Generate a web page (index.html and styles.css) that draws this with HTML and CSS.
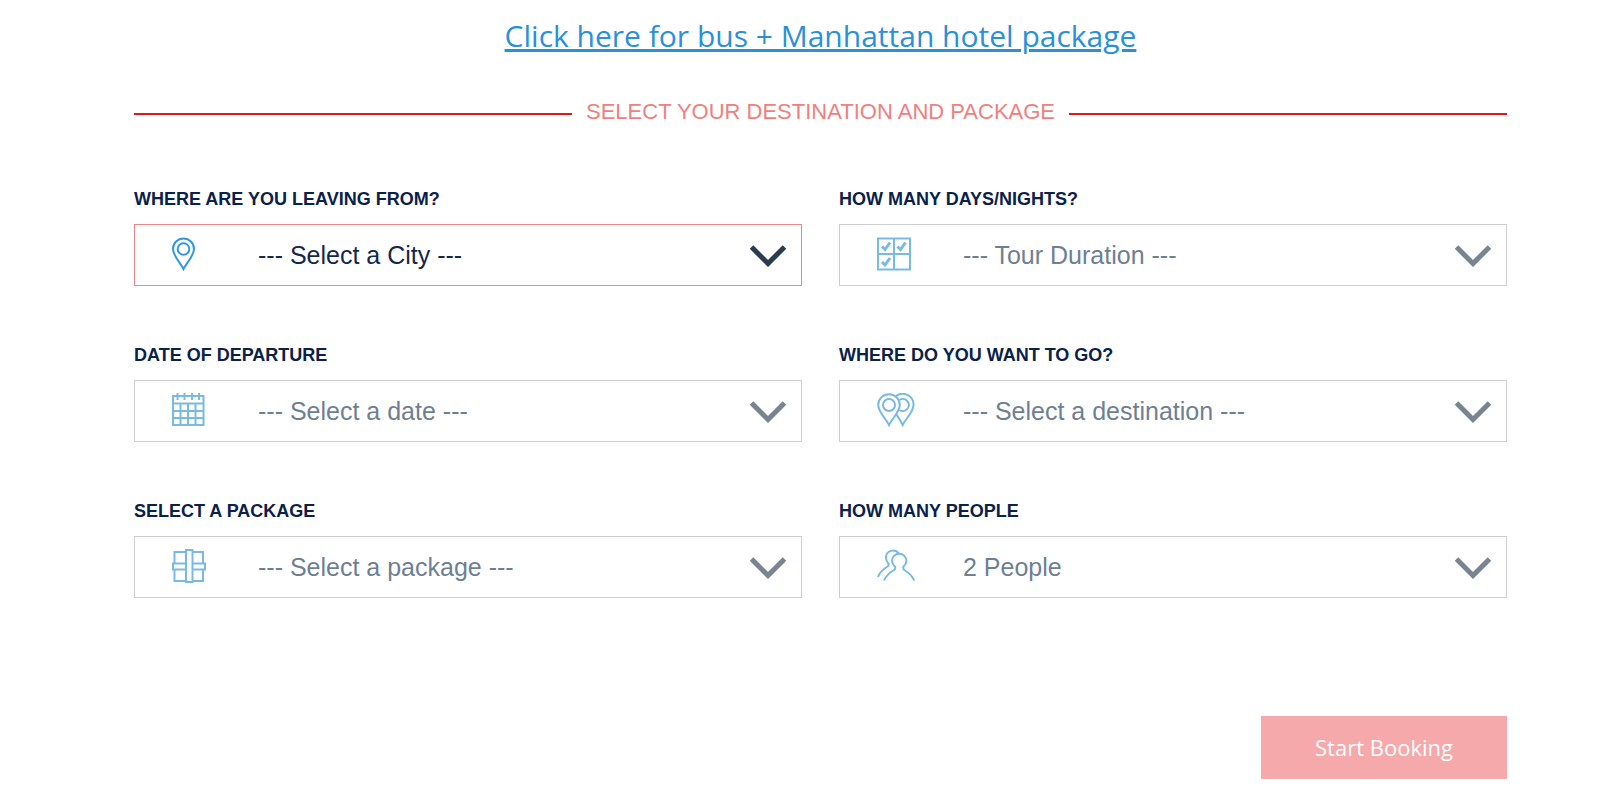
FILE: index.html
```html
<!DOCTYPE html>
<html lang="en">

<head>
  <meta charset="UTF-8">
  <meta name="viewport" content="width=device-width, initial-scale=1.0">
  <title>Select your destination and package</title>
  <link rel="stylesheet" href="styles.css">
</head>

<body>
  <div class="container">
    <a class="hotel-link" href="#hotel">Click here for bus + Manhattan hotel package</a>

    <h1 class="section-title">SELECT YOUR DESTINATION AND PACKAGE</h1>

    <form class="booking-form">
      <div class="form-grid">
        <div class="form-group">
          <label for="city">WHERE ARE YOU LEAVING FROM?</label>
          <div class="field">
            <select id="city" name="city">
              <option>--- Select a City ---</option>
            </select>
            <svg class="icon" viewBox="0 0 38 34">
              <path d="M11.500 32C9 26.500 1 19 1 12a10.500 10.500 0 0 1 21 0c0 7-8 14.500-10.500 20z" />
              <circle cx="11.500" cy="12" r="5.800" />
            </svg>
            <svg class="arrow" viewBox="0 0 36 22"><path d="M1.500 2L18 18.500 34.500 2" /></svg>
          </div>
        </div>

        <div class="form-group">
          <label for="duration">HOW MANY DAYS/NIGHTS?</label>
          <div class="field">
            <select id="duration" name="duration" disabled>
              <option>--- Tour Duration ---</option>
            </select>
            <svg class="icon" viewBox="0 0 38 34">
              <path d="M1 1.500h32v31H1zM17 1.500v31M1 17h32" />
              <path class="tick" d="M5 9.500l3 3 5-7M20.500 9.500l3 3 5-7M5 25l3 3 5-7" />
            </svg>
            <svg class="arrow" viewBox="0 0 36 22"><path d="M1.500 2L18 18.500 34.500 2" /></svg>
          </div>
        </div>

        <div class="form-group">
          <label for="date">DATE OF DEPARTURE</label>
          <div class="field">
            <select id="date" name="date" disabled>
              <option>--- Select a date ---</option>
            </select>
            <svg class="icon" viewBox="0 0 38 34">
              <path d="M1 3h30.500v29H1zM1 10.500h30.500M1 18h30.500M1 25h30.500M8.500 10.500v22M16 10.500v22M23.500 10.500v22" />
              <path d="M5.500 0v7M12.500 0v7M20 0v7M27 0v7" />
            </svg>
            <svg class="arrow" viewBox="0 0 36 22"><path d="M1.500 2L18 18.500 34.500 2" /></svg>
          </div>
        </div>

        <div class="form-group">
          <label for="destination">WHERE DO YOU WANT TO GO?</label>
          <div class="field">
            <select id="destination" name="destination" disabled>
              <option>--- Select a destination ---</option>
            </select>
            <svg class="icon" viewBox="0 0 38 34">
              <path d="M12 32C9.500 26.500 1.200 19 1.200 12a10.800 10.800 0 0 1 21.600 0c0 7-8.300 14.500-10.800 20z" />
              <circle cx="12" cy="12" r="6" />
              <path d="M18.500 3.600A10.800 10.800 0 0 1 36.500 12c0 7-8.300 14.500-10.800 20-1.500-3.300-4-7-6.300-10.500M22.500 7A6 6 0 1 1 22.500 17" />
            </svg>
            <svg class="arrow" viewBox="0 0 36 22"><path d="M1.500 2L18 18.500 34.500 2" /></svg>
          </div>
        </div>

        <div class="form-group">
          <label for="package">SELECT A PACKAGE</label>
          <div class="field">
            <select id="package" name="package" disabled>
              <option>--- Select a package ---</option>
            </select>
            <svg class="icon" viewBox="0 0 38 34">
              <path d="M14 3H2.500v11.500M20.500 3H31v11.500M14 32H2.500V20.500M20.500 32H31V20.500" />
              <path d="M14 14.500H1v6h13M20.500 14.500H33v6H20.500" />
              <path d="M14 1h6.500v32H14z" />
            </svg>
            <svg class="arrow" viewBox="0 0 36 22"><path d="M1.500 2L18 18.500 34.500 2" /></svg>
          </div>
        </div>

        <div class="form-group">
          <label for="people">HOW MANY PEOPLE</label>
          <div class="field">
            <select id="people" name="people" disabled>
              <option>2 People</option>
            </select>
            <svg class="icon" viewBox="0 0 38 34">
              <path d="M7 31.500c1.500-4.500 5-7.500 10.800-11l.4-2.500c-2-2-3.200-4-3.200-6a7.200 7.200 0 0 1 14.400 0c0 2-1.200 4-3.200 6l.4 2.500c5.800 3.500 9 6.500 10.500 11" />
              <path d="M1 28c1.500-4.500 4.500-7.500 10.300-11l.4-2c-1.700-2-2.700-4-2.700-6a7 7 0 0 1 13-4" />
            </svg>
            <svg class="arrow" viewBox="0 0 36 22"><path d="M1.500 2L18 18.500 34.500 2" /></svg>
          </div>
        </div>
      </div>

      <button class="start-button" type="submit" disabled>Start Booking</button>
    </form>
  </div>
</body>

</html>
```

FILE: styles.css
```css
* {
  box-sizing: border-box;
}

body {
  font-family: "Liberation Sans", Arial, sans-serif;
  background-color: #fff;
  margin: 0;
  padding: 14px 93px 0 134px;
}

.container {
  display: flex;
  flex-direction: column;
}

.hotel-link {
  align-self: center;
  font-family: "Open Sans", sans-serif;
  font-size: 30px;
  line-height: 44px;
  color: #2b90d9;
}

/* Title with a red rule on both sides */
.section-title {
  display: flex;
  align-items: center;
  gap: 14px;
  margin: 40px 0 0;
  font-size: 22px;
  font-weight: normal;
  line-height: 28px;
  color: #f08080;
}

.section-title::before,
.section-title::after {
  content: "";
  flex: 1;
  height: 2px;
  margin-top: 4px;
  background-color: #e01a1a;
}

.booking-form {
  display: flex;
  flex-direction: column;
  margin-top: 63px;
}

.form-grid {
  display: grid;
  grid-template-columns: 1fr 1fr;
  column-gap: 37px;
  row-gap: 59px;
}

.form-group label {
  display: block;
  margin-bottom: 15px;
  font-size: 18px;
  font-weight: bold;
  line-height: 20px;
  color: #0a2149;
}

/* Select, icon and arrow share one grid cell */
.field {
  display: grid;
  align-items: center;
}

.field > * {
  grid-area: 1 / 1;
}

.field select {
  appearance: none;
  width: 100%;
  height: 62px;
  padding: 0 60px 0 123px;
  border: 1px solid #f0868a;
  border-radius: 0;
  background-color: #fff;
  font-family: inherit;
  font-size: 25px;
  color: #14294a;
  outline: none;
}

.field select:disabled {
  border-color: #cfcfcf;
  color: #6f7f92;
  opacity: 1;
}

.icon {
  width: 38px;
  height: 34px;
  margin-left: 38px;
  margin-bottom: 2px;
  fill: none;
  stroke: #3498e0;
  stroke-width: 2;
  pointer-events: none;
}

.icon .tick {
  stroke-width: 3;
}

.arrow {
  justify-self: end;
  width: 36px;
  height: 22px;
  margin-right: 16px;
  margin-top: 2px;
  fill: none;
  stroke: #2b3c52;
  stroke-width: 5;
  pointer-events: none;
}

select:disabled ~ .icon {
  stroke: #78bae4;
}

select:disabled ~ .arrow {
  stroke: #78848f;
}

.start-button {
  align-self: flex-end;
  width: 246px;
  height: 63px;
  margin-top: 118px;
  padding: 0 0 2px;
  border: none;
  background-color: #f5a9ab;
  font-family: "Open Sans", sans-serif;
  font-size: 22px;
  font-weight: 500;
  color: #fff;
  cursor: pointer;
}

@media screen and (max-width: 800px) {
  body {
    padding: 14px 20px;
  }

  .form-grid {
    grid-template-columns: 1fr;
  }
}
```
